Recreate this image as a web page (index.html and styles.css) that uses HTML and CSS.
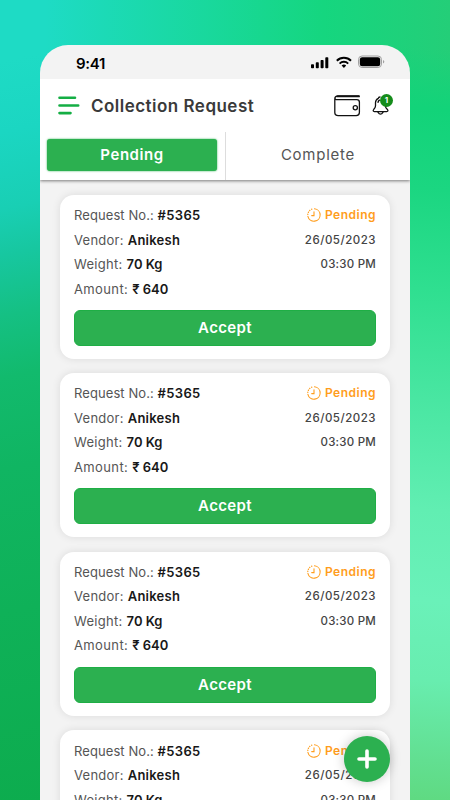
FILE: index.html
```html
<!DOCTYPE html>
<html lang="en">
<head>
<meta charset="utf-8">
<title>Collection Request</title>
<link rel="stylesheet" href="styles.css">
</head>
<body>
<svg class="defs" width="0" height="0" aria-hidden="true">
  <symbol id="clock" viewBox="0 0 14 14">
    <g fill="none" stroke="#ff9d1c" stroke-linecap="round">
      <path d="M7.5.8a6.2 6.2 0 1 1-6.6 7.6" stroke-width="1.1"/>
      <path d="M.8 6.5A6.2 6.2 0 0 1 5.8.9" stroke-width="1.2" stroke-dasharray=".3 1.9"/>
      <path d="M7 3.8V7.6H4.7" stroke-width="1.1"/>
    </g>
  </symbol>
</svg>
<main class="phone">
  <div class="status">
    <span class="time">9:41</span>
    <svg class="status-icons" width="74" height="14" viewBox="0 0 74 14">
      <g>
        <rect x="0" y="9.2" width="3" height="4" rx=".8"/>
        <rect x="4.8" y="7.2" width="3" height="6" rx=".8"/>
        <rect x="9.6" y="4.9" width="3" height="8.3" rx=".8"/>
        <rect x="14.3" y="2.2" width="3" height="11" rx=".8"/>
      </g>
      <g fill="none" stroke="#000" stroke-width="2">
        <path d="M25.8 5.7a10.2 10.2 0 0 1 14.2 0"/>
        <path d="M28.600 8.600a6.200 6.200 0 0 1 8.600 0"/>
      </g>
      <path d="M30.600 10.600a3.400 3.400 0 0 1 4.600 0l-2.300 2.500z"/>
      <rect x="47.500" y="1" width="23" height="11.500" rx="3.600" fill="none" stroke="#a0a0a0"/>
      <rect x="48.800" y="2.300" width="20.400" height="8.900" rx="2.300"/>
      <path d="M72 5v3.600q1.300-.5 1.300-1.800T72 5z" fill="#a0a0a0"/>
    </svg>
  </div>
  <header class="bar">
    <svg class="menu" width="22" height="20" viewBox="0 0 22 20" fill="none" stroke="#14ae44" stroke-width="2.600" stroke-linecap="round">
      <path d="M1.500 1.700H17M1.500 9.500H20.200M1.500 17.100H12.500"/>
    </svg>
    <h1>Collection Request</h1>
    <svg class="wallet" width="27" height="22" viewBox="0 0 27 22" fill="none" stroke="#111" stroke-width="1.300" stroke-linecap="round">
      <path d="M25 1H4Q.8 1 .8 4V17.500Q.8 20.600 4.200 20.600H22.200Q25.400 20.600 25.400 17.600V7.200Q25.400 4.700 22.800 4.700H3.200Q1 4.700 1 3.200"/>
      <path d="M3.500 1.400H25" stroke-width="1.800"/>
      <circle cx="21.300" cy="12.800" r="2.100"/>
    </svg>
    <div class="alerts">
      <svg width="18" height="20" viewBox="0 0 18 20" fill="none" stroke="#111" stroke-width="1.300" stroke-linecap="round" stroke-linejoin="round">
        <path d="M6.300 2.300A5 5 0 0 0 3.500 6.600V10Q3.300 12 1.800 13.300Q.3 15.300 2.500 15.600H14.500Q17 15.200 15.200 13.300Q13.500 12 13.300 9.500M6.300 2.300Q6.500 1 8 1M6 16.300Q8.500 20 11 16.300M6 6.300Q6.200 4.800 7.500 4.100"/>
      </svg>
      <span class="badge">1</span>
    </div>
  </header>
  <nav class="tabs">
    <div class="tab"><span class="active">Pending</span></div>
    <div class="tab second"><span class="other">Complete</span></div>
  </nav>
  <section class="list">
    <article class="card">
      <div class="row"><p>Request No.: <b>#5365</b></p><span class="state"><svg width="14" height="14"><use href="#clock"/></svg>Pending</span></div>
      <div class="row vendor"><p>Vendor: <b>Anikesh</b></p><span class="date">26/05/2023</span></div>
      <div class="row weight"><p>Weight: <b>70 Kg</b></p><span class="hour">03:30 PM</span></div>
      <div class="row amount"><p>Amount: <b>₹ 640</b></p></div>
      <button>Accept</button>
    </article>
    <article class="card">
      <div class="row"><p>Request No.: <b>#5365</b></p><span class="state"><svg width="14" height="14"><use href="#clock"/></svg>Pending</span></div>
      <div class="row vendor"><p>Vendor: <b>Anikesh</b></p><span class="date">26/05/2023</span></div>
      <div class="row weight"><p>Weight: <b>70 Kg</b></p><span class="hour">03:30 PM</span></div>
      <div class="row amount"><p>Amount: <b>₹ 640</b></p></div>
      <button>Accept</button>
    </article>
    <article class="card">
      <div class="row"><p>Request No.: <b>#5365</b></p><span class="state"><svg width="14" height="14"><use href="#clock"/></svg>Pending</span></div>
      <div class="row vendor"><p>Vendor: <b>Anikesh</b></p><span class="date">26/05/2023</span></div>
      <div class="row weight"><p>Weight: <b>70 Kg</b></p><span class="hour">03:30 PM</span></div>
      <div class="row amount"><p>Amount: <b>₹ 640</b></p></div>
      <button>Accept</button>
    </article>
    <article class="card last">
      <div class="row"><p>Request No.: <b>#5365</b></p><span class="state"><svg width="14" height="14"><use href="#clock"/></svg>Pending</span></div>
      <div class="row vendor"><p>Vendor: <b>Anikesh</b></p><span class="date">26/05/2023</span></div>
      <div class="row weight"><p>Weight: <b>70 Kg</b></p><span class="hour">03:30 PM</span></div>
    </article>
  </section>
  <div class="fab">
    <svg width="20" height="20" viewBox="0 0 20 20" fill="none" stroke="#fff" stroke-width="3.600" stroke-linecap="round"><path d="M10 2V18M2 10H18"/></svg>
  </div>
</main>
</body>
</html>
```
FILE: styles.css
```css
* { box-sizing: border-box; }
body {
  margin: 0;
  width: 450px;
  height: 800px;
  overflow: hidden;
  padding: 45px 40px 0;
  font-family: Inter, "Noto Sans", sans-serif;
  background:
    linear-gradient(184deg, rgba(18, 211, 121, 0) 0, rgba(18, 211, 121, 0) 50px, #12d379 110px, #1bd681 190px, #2fdf90 290px, #49e6a2 400px, #61eeb2 510px, #6af1b9 600px, #68edaf 680px, #62df91 760px, #5fda82 800px) right / 60px 100% no-repeat,
    linear-gradient(168deg, rgba(27, 214, 192, 0) 0, rgba(27, 214, 192, 0) 60px, #1bd6c2 130px, #19cfb4 205px, #17c7a0 250px, #15c083 310px, #12ba6d 370px, #10b562 460px, #0fb158 600px, #0dac4e 100%) left / 60px 100% no-repeat,
    linear-gradient(to right, rgba(19, 213, 120, 0) 10%, #15d67f 72%, #24ce78 100%),
    #1edbc5;
}
.defs { position: absolute; }
.phone {
  position: relative;
  height: 755px;
  overflow: hidden;
  border-radius: 28px 28px 0 0;
  background: #f3f3f3;
}
.status {
  display: flex;
  justify-content: space-between;
  height: 34px;
  padding: 10px 25px 0 36px;
}
.time { font-size: 15px; line-height: 18px; font-weight: 600; letter-spacing: -.3px; }
.bar {
  position: relative;
  z-index: 1;
  display: flex;
  align-items: center;
  height: 53px;
  padding: 0 16px 0 18px;
  background: #fff;
}
h1 { margin: 0 0 0 11px; font-size: 17px; line-height: 24px; font-weight: 600; color: #3a3a3a; white-space: nowrap; letter-spacing: .48px; }
.wallet { margin-left: auto; }
.alerts { position: relative; width: 22px; height: 20px; margin-left: 11px; }
.badge {
  position: absolute;
  left: 8px;
  top: -2px;
  width: 13px;
  height: 13px;
  border-radius: 50%;
  background: #158c1b;
  color: #fff;
  font-size: 8px;
  line-height: 13px;
  font-weight: 700;
  text-align: center;
}
.tabs {
  position: relative;
  display: grid;
  grid-template-columns: 185px 1fr;
  height: 48px;
  background: #fff;
  box-shadow: 0 1px 3px rgba(0, 0, 0, .5);
}
.tab { padding: 7px 7px 8px; }
.second { border-left: 1px solid #ddd; }
.active, .other { display: block; height: 32px; line-height: 32px; text-align: center; font-size: 15px; }
.active { width: 170px; border-radius: 3px; background: #2cb050; color: #fff; font-weight: 600; letter-spacing: .55px; box-shadow: 0 0 2px #2cb050; }
.other { color: #555; letter-spacing: .75px; }
.list { display: grid; gap: 14.300px; padding: 15px 20px; }
.card {
  height: 164px;
  padding: 8px 14px 0;
  border-radius: 14px;
  background: #fff;
  box-shadow: 0 0 9px rgba(0, 0, 0, .1);
}
.last { padding-top: 9px; }
.row { display: flex; justify-content: space-between; height: 24.600px; line-height: 24px; color: #555; white-space: nowrap; }
p { margin: 0; font-size: 13px; letter-spacing: .08px; }
.vendor p { letter-spacing: .26px; }
.weight p { letter-spacing: .3px; }
.amount p { letter-spacing: .38px; }
b { color: #181818; font-weight: 600; letter-spacing: .35px; }
.vendor b { letter-spacing: .24px; }
.weight b, .amount b { letter-spacing: 0; }
.state { display: flex; align-items: center; height: 24px; gap: 4px; color: #ff9d1c; font-size: 12px; font-weight: 600; letter-spacing: .5px; }
.date, .hour { font-size: 11.500px; font-weight: 500; color: #444; letter-spacing: .5px; }
.hour { letter-spacing: .22px; }
button {
  display: block;
  width: 100%;
  height: 36px;
  margin: 8.600px 0 0;
  padding: 0;
  border: 1px solid #1fae45;
  border-radius: 6px;
  background: #2cb050;
  color: #fff;
  font: 600 15px/34px Inter, sans-serif;
  letter-spacing: .35px;
}
.fab {
  position: absolute;
  right: 20px;
  bottom: 18px;
  width: 46px;
  height: 46px;
  display: grid;
  place-items: center;
  border-radius: 50%;
  background: #2cb050;
  box-shadow: 0 0 12px rgba(0, 0, 0, .22);
}
```
